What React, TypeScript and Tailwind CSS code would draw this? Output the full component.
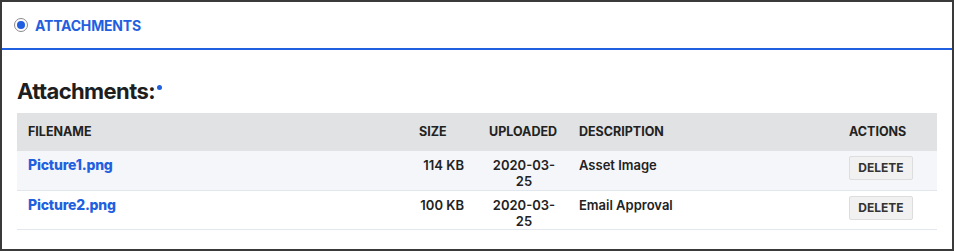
import React from "react";

const rows = [
  { name: "Picture1.png", size: "114 KB", date: ["2020-03-", "25"], desc: "Asset Image", bg: "bg-[#f5f6fa]" },
  { name: "Picture2.png", size: "100 KB", date: ["2020-03-", "25"], desc: "Email Approval", bg: "bg-white" },
];

export default function App() {
  return (
    <div className="w-[954px] h-[251px] box-border border-2 border-[#3a3a3a] bg-white font-['Inter',sans-serif] text-[#222]">
      <div className="h-[48px] flex items-center pl-[12px] border-b-2 border-[#1f5fe0]">
        <span className="w-[14px] h-[14px] rounded-full border border-[#8a8a8a] flex items-center justify-center">
          <span className="w-[8px] h-[8px] rounded-full bg-[#1f5fe0]" />
        </span>
        <span className="ml-[7px] text-[14px] font-bold text-[#1f5fe0] tracking-[-0.2px]">ATTACHMENTS</span>
      </div>
      <div className="px-[15px]">
        <div className="mt-[27px] h-[36px] flex items-start">
          <h2 className="text-[22px] leading-[28px] font-bold text-[#1e1e1e] tracking-[-0.6px]">Attachments:</h2>
          <span className="ml-[2px] mt-[8px] w-[5px] h-[5px] rounded-full bg-[#1f5fe0]" />
        </div>
        <table className="w-[920px] table-fixed border-collapse text-[13px]">
          <colgroup>
            <col className="w-[391px]" />
            <col className="w-[70px]" />
            <col className="w-[90px]" />
            <col className="w-[270px]" />
            <col className="w-[99px]" />
          </colgroup>
          <thead>
            <tr className="bg-[#e1e2e4] h-[38px] text-[12.5px] font-bold text-[#222]">
              <th className="text-left pl-[11px] font-bold">FILENAME</th>
              <th className="text-left pl-[11px] font-bold">SIZE</th>
              <th className="text-left pl-[11px] font-bold">UPLOADED</th>
              <th className="text-left pl-[11px] font-bold">DESCRIPTION</th>
              <th className="text-left pl-[11px] font-bold">ACTIONS</th>
            </tr>
          </thead>
          <tbody>
            {rows.map((r) => (
              <tr key={r.name} className={`${r.bg} h-[39px] border-b border-[#e2e6ed] align-top`}>
                <td className="pl-[11px] pt-[6px] leading-[16px]">
                  <a className="text-[14px] font-extrabold text-[#1f5fe0] tracking-[-0.2px]">{r.name}</a>
                </td>
                <td className="pr-[14px] pt-[6px] leading-[16px] text-right font-semibold">{r.size}</td>
                <td className="pt-[6px] pb-0 leading-[16px] text-center font-semibold pl-[2px]">
                  <div>{r.date[0]}</div>
                  <div>{r.date[1]}</div>
                </td>
                <td className="pl-[11px] pt-[6px] leading-[16px] font-semibold">{r.desc}</td>
                <td className="pl-[11px] pt-[5px]">
                  <button className="w-[64px] h-[24px] rounded-[2px] border border-[#dddddd] bg-[#f1f1f1] text-[12px] font-bold text-[#333] flex items-center justify-center">
                    DELETE
                  </button>
                </td>
              </tr>
            ))}
          </tbody>
        </table>
      </div>
    </div>
  );
}
